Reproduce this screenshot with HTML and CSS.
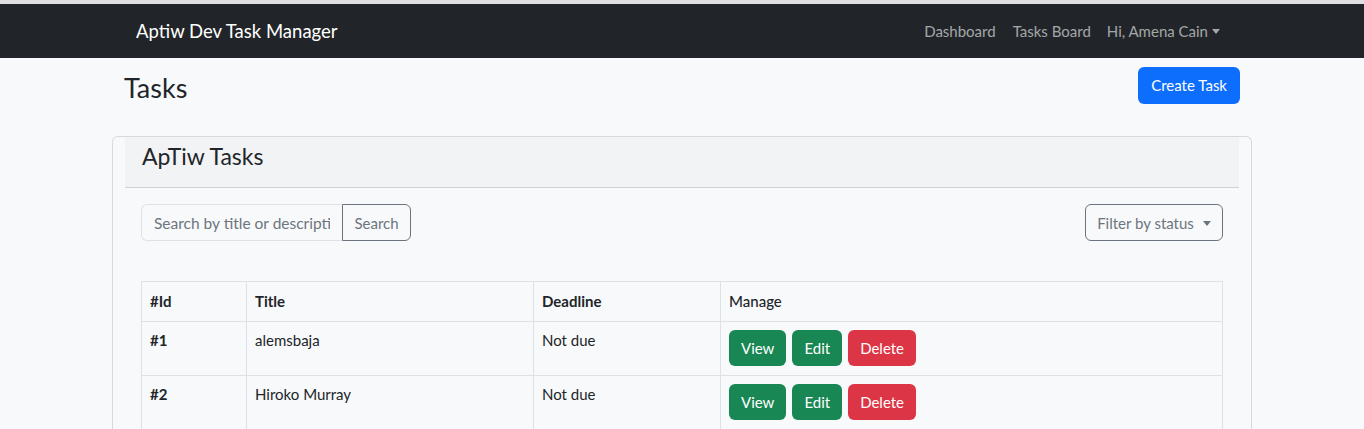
FILE: index.html
```html
<!DOCTYPE html>
<html lang="en">
<head>
<meta charset="utf-8">
<title>Aptiw Dev Task Manager</title>
<link rel="stylesheet" href="styles.css">
</head>
<body>
<div class="topline"></div>
<nav class="navbar">
  <div class="nav-inner">
    <a class="brand" href="#">Aptiw Dev Task Manager</a>
    <ul class="nav-links">
      <li><a href="#">Dashboard</a></li>
      <li><a href="#">Tasks Board</a></li>
      <li><a href="#" class="dropdown">Hi, Amena Cain<span class="caret"></span></a></li>
    </ul>
  </div>
</nav>
<main class="container">
  <div class="page-head">
    <h3 class="page-title">Tasks</h3>
    <button class="btn btn-primary">Create Task</button>
  </div>
  <section class="card">
    <div class="card-header"><h4>ApTiw Tasks</h4></div>
    <div class="card-body">
      <div class="toolbar">
        <div class="search-group">
          <input class="search-input" type="text" placeholder="Search by title or description">
          <button class="btn btn-outline search-btn">Search</button>
        </div>
        <button class="btn btn-outline filter-btn">Filter by status<span class="caret dark"></span></button>
      </div>
      <table class="tasks">
        <colgroup>
          <col class="c-id"><col class="c-title"><col class="c-deadline"><col class="c-manage">
        </colgroup>
        <thead>
          <tr><th>#Id</th><th>Title</th><th>Deadline</th><th class="light">Manage</th></tr>
        </thead>
        <tbody>
          <tr>
            <td class="bold">#1</td><td>alemsbaja</td><td>Not due</td>
            <td><div class="actions"><button class="btn btn-success">View</button><button class="btn btn-success">Edit</button><button class="btn btn-danger">Delete</button></div></td>
          </tr>
          <tr>
            <td class="bold">#2</td><td>Hiroko Murray</td><td>Not due</td>
            <td><div class="actions"><button class="btn btn-success">View</button><button class="btn btn-success">Edit</button><button class="btn btn-danger">Delete</button></div></td>
          </tr>
        </tbody>
      </table>
    </div>
  </section>
</main>
</body>
</html>
```
FILE: styles.css
```css
* { box-sizing: border-box; }
html, body { margin: 0; padding: 0; }
body {
  background: #f8f9fa;
  font-family: Lato, "Noto Sans", sans-serif;
  color: #212529;
  font-size: 15px;
  overflow: hidden;
}
.topline { height: 4px; background: #dfdfdf; }
.navbar { background: #212529; height: 54px; }
.nav-inner {
  width: 1140px; margin: 0 auto; padding: 0 24px; height: 100%;
  display: flex; align-items: center; justify-content: space-between;
}
.brand { color: #fff; text-decoration: none; font-size: 18.5px; }
.nav-links { list-style: none; margin: 0; padding: 0; display: flex; }
.nav-links a {
  display: inline-flex; align-items: center;
  color: rgba(255,255,255,.6); text-decoration: none; font-size: 15px; padding: 8px;
}
.nav-links li:first-child a { padding-right: 9px; }
.caret {
  display: inline-block; margin-left: 4px; width: 0; height: 0;
  border-left: 4px solid transparent; border-right: 4px solid transparent;
  border-top: 5px solid rgba(255,255,255,.6); margin-top: 1px;
}
.caret.dark { border-top-color: #6c757d; margin-left: 9px; }
.container { width: 1140px; margin: 0 auto; }
.page-head {
  display: flex; justify-content: space-between; align-items: flex-start;
  padding: 9px 12px 0;
}
.page-title { margin: 5px 0 0; font-size: 27px; font-weight: 400; line-height: 1.2; }
.btn {
  font-family: inherit; font-size: 15px; line-height: 1.5;
  border: 1px solid transparent; border-radius: 6px; padding: 6px 12px;
  cursor: pointer; background: none; white-space: nowrap;
}
.btn-primary { background: #0d6efd; color: #fff; height: 37px; padding: 0 12px; }
.card {
  margin-top: 32px; border: 1px solid #d7d9db; border-radius: 6px;
  border-bottom: none; border-bottom-left-radius: 0; border-bottom-right-radius: 0;
}
.card-header {
  margin: 0 12px; height: 51px; background: #f2f3f4;
  border-bottom: 1px solid #cfd1d3; padding: 0 17px;
  display: flex; align-items: center;
}
.card-header h4 { margin: 0 0 12px; font-size: 23px; font-weight: 400; line-height: 1.2; }
.card-body { padding: 16px 28px 0; }
.toolbar { display: flex; justify-content: space-between; align-items: center; }
.search-group { display: flex; }
.search-input {
  width: 201px; height: 37px; border: 1px solid #dee2e6; border-right: none;
  border-radius: 6px 0 0 6px; background: #f8f9fa; padding: 0 12px;
  font-family: inherit; font-size: 15.5px; color: #212529; outline: none;
}
.search-input::placeholder { color: #6c757d; }
.btn-outline { border-color: #6c757d; color: #6c757d; height: 37px; }
.search-btn { border-radius: 0 6px 6px 0; width: 69px; padding: 0; }
.filter-btn { width: 138px; padding: 0 10px; display: inline-flex; align-items: center; justify-content: center; }
.tasks {
  margin-top: 40px; width: 100%; border-collapse: collapse; table-layout: fixed;
  font-size: 15px;
}
.c-id { width: 105px; } .c-title { width: 287px; } .c-deadline { width: 187px; }
.tasks th, .tasks td {
  border: 1px solid #dee2e6; padding: 8px; text-align: left; vertical-align: top;
}
.tasks th { font-weight: 700; font-size: 15px; height: 40px; vertical-align: middle; padding-bottom: 10px; }
.tasks th.light { font-weight: 500; }
.tasks td { height: 54px; padding-top: 9px; }
.tasks td.bold { font-weight: 700; }
.tasks td:last-child { padding-top: 8px; }
.actions { display: flex; gap: 6px; }
.btn-success { background: #198754; color: #fff; height: 36px; padding: 0 11px; }
.btn-danger { background: #dc3545; color: #fff; height: 36px; padding: 0 11px; }
```
